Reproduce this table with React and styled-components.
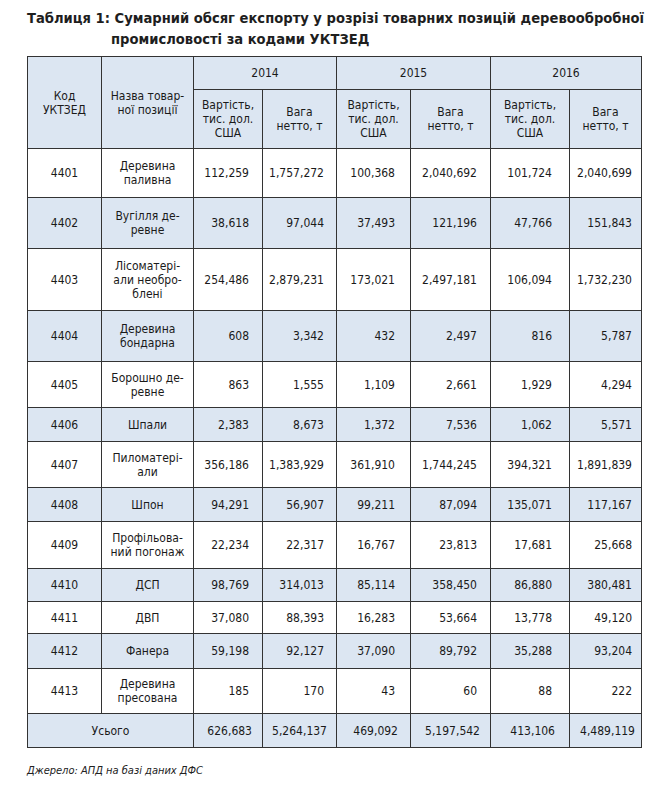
import React from 'react'
import styled, { createGlobalStyle } from 'styled-components'

const GlobalStyle = createGlobalStyle`
  body {
    margin: 0;
    background: #fff;
    font-family: "DejaVu Sans Condensed", "DejaVu Sans", sans-serif;
  }
`

const rows = [
  { code: '4401', name: 'Деревина\nпаливна', v: ['112,259', '1,757,272', '100,368', '2,040,692', '101,724', '2,040,699'], h: 49 },
  { code: '4402', name: 'Вугілля де-\nревне', v: ['38,618', '97,044', '37,493', '121,196', '47,766', '151,843'], h: 51 },
  { code: '4403', name: 'Лісоматері-\nали необро-\nблені', v: ['254,486', '2,879,231', '173,021', '2,497,181', '106,094', '1,732,230'], h: 62 },
  { code: '4404', name: 'Деревина\nбондарна', v: ['608', '3,342', '432', '2,497', '816', '5,787'], h: 51 },
  { code: '4405', name: 'Борошно де-\nревне', v: ['863', '1,555', '1,109', '2,661', '1,929', '4,294'], h: 46 },
  { code: '4406', name: 'Шпали', v: ['2,383', '8,673', '1,372', '7,536', '1,062', '5,571'], h: 34 },
  { code: '4407', name: 'Пиломатері-\nали', v: ['356,186', '1,383,929', '361,910', '1,744,245', '394,321', '1,891,839'], h: 46 },
  { code: '4408', name: 'Шпон', v: ['94,291', '56,907', '99,211', '87,094', '135,071', '117,167'], h: 34 },
  { code: '4409', name: 'Профільова-\nний погонаж', v: ['22,234', '22,317', '16,767', '23,813', '17,681', '25,668'], h: 47 },
  { code: '4410', name: 'ДСП', v: ['98,769', '314,013', '85,114', '358,450', '86,880', '380,481'], h: 33 },
  { code: '4411', name: 'ДВП', v: ['37,080', '88,393', '16,283', '53,664', '13,778', '49,120'], h: 32 },
  { code: '4412', name: 'Фанера', v: ['59,198', '92,127', '37,090', '89,792', '35,288', '93,204'], h: 35 },
  { code: '4413', name: 'Деревина\nпресована', v: ['185', '170', '43', '60', '88', '222'], h: 45 },
]

const total = ['626,683', '5,264,137', '469,092', '5,197,542', '413,106', '4,489,119']
const colWidths = [74, 92, 69, 74, 74, 80, 79, 72]
const numPad = [13, 12, 15, 13, 17, 9]

const Page = styled.div`
  width: 665px;
  padding: 7px 0 0 27px;
  box-sizing: border-box;
  color: #1a1a1a;
`

const Title = styled.h1`
  margin: 0 0 7px;
  padding-left: 84px;
  text-indent: -84px;
  white-space: pre-line;
  font-size: 14.6px;
  line-height: 21px;
  font-weight: bold;
  color: #1e1e1e;
`

const Table = styled.table`
  border-collapse: collapse;
  table-layout: fixed;
  width: 614px;
  border: 1.5px solid #2a2a2a;
  font-size: 12px;
  line-height: 14px;
`

const Row = styled.tr`
  height: ${p => p.$h}px;
  background: ${p => (p.$shade ? '#dce6f2' : '#fff')};
`

const HeadCell = styled.th`
  font-weight: normal;
  background: #dce6f2;
  border: 1px solid #333;
  text-align: center;
  vertical-align: middle;
  white-space: pre-line;
  padding: 0 2px;
`

const Cell = styled.td`
  border: 1px solid #333;
  vertical-align: middle;
  white-space: pre-line;
  text-align: ${p => (p.$num ? 'right' : 'center')};
  padding: 0 ${p => p.$pad || 2}px 0 2px;
`

const Source = styled.p`
  margin: 16px 0 0;
  font-size: 11px;
  font-style: italic;
  color: #222;
`

const App = () => (
  <Page>
    <GlobalStyle />
    <Title>{'Таблиця 1: Сумарний обсяг експорту у розрізі товарних позицій деревообробної\nпромисловості за кодами УКТЗЕД'}</Title>
    <Table>
      <colgroup>
        {colWidths.map((w, i) => <col key={i} style={{ width: w }} />)}
      </colgroup>
      <thead>
        <Row $h={33}>
          <HeadCell rowSpan={2}>{'Код\nУКТЗЕД'}</HeadCell>
          <HeadCell rowSpan={2}>{'Назва товар-\nної позиції'}</HeadCell>
          <HeadCell colSpan={2}>2014</HeadCell>
          <HeadCell colSpan={2}>2015</HeadCell>
          <HeadCell colSpan={2}>2016</HeadCell>
        </Row>
        <Row $h={59}>
          {[0, 1, 2].map(i => (
            <React.Fragment key={i}>
              <HeadCell>{'Вартість,\nтис. дол.\nСША'}</HeadCell>
              <HeadCell>{'Вага\nнетто, т'}</HeadCell>
            </React.Fragment>
          ))}
        </Row>
      </thead>
      <tbody>
        {rows.map((r, i) => (
          <Row key={r.code} $h={r.h} $shade={i % 2 === 1}>
            <Cell>{r.code}</Cell>
            <Cell>{r.name}</Cell>
            {r.v.map((n, j) => <Cell key={j} $num $pad={numPad[j]}>{n}</Cell>)}
          </Row>
        ))}
        <Row $h={34} $shade>
          <Cell colSpan={2}>Усього</Cell>
          {total.map((n, j) => <Cell key={j} $num $pad={numPad[j] - 3}>{n}</Cell>)}
        </Row>
      </tbody>
    </Table>
    <Source>Джерело: АПД на базі даних ДФС</Source>
  </Page>
)

export default App
